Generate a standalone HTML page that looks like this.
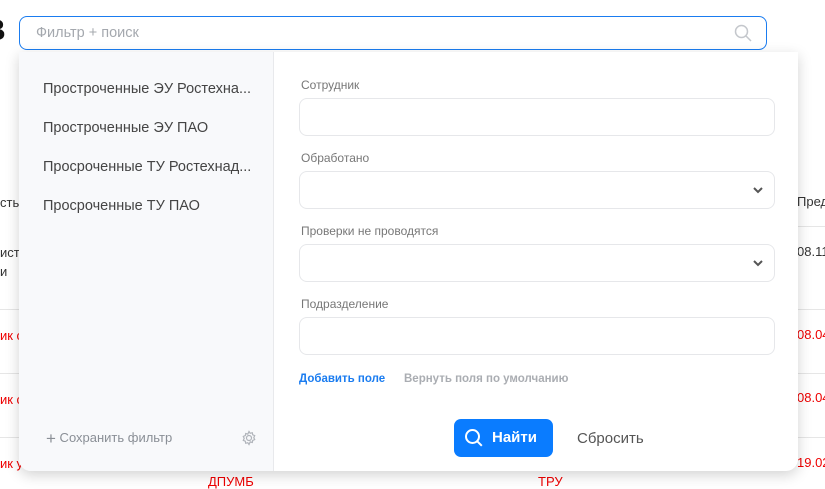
<!DOCTYPE html>
<html><head><meta charset="utf-8"><style>
*{box-sizing:border-box;margin:0;padding:0}
body{width:825px;height:479px;overflow:hidden;background:#fff;font-family:"Liberation Sans","Noto Sans CJK SC",sans-serif;position:relative;color:#333}
.a{position:absolute;white-space:nowrap}
.red{color:#e00}
.hl{position:absolute;height:1px;background:#e6e6e6}
.search{position:absolute;left:19px;top:16px;width:748px;height:34px;border:1px solid #1a7cf0;border-radius:8px;background:#fff}
.panel{position:absolute;left:19px;top:52px;width:779px;height:419px;background:#fff;border-radius:0 0 12px 12px;box-shadow:0 4px 14px rgba(0,0,0,.18);overflow:hidden}
.left{position:absolute;left:0;top:0;width:255px;height:100%;background:#f8f9fb;border-right:1px solid #e8e9ec}
.item{position:absolute;left:24px;font-size:14.5px;color:#444}
.lab{position:absolute;left:282px;font-size:12px;color:#777}
.inp{position:absolute;left:280px;width:476px;height:38px;border:1px solid #e6e7ea;border-radius:8px}
.chev{position:absolute;right:10px;top:13px}
</style></head><body>
<div class="a" style="left:-16px;top:14px;font-size:30px;font-weight:bold;color:#111">В</div>
<div class="a" style="left:0;top:195px;font-size:13px">сть</div>
<div class="a" style="left:0;top:245px;font-size:13px">ист</div>
<div class="a" style="left:0;top:264px;font-size:13px">и</div>
<div class="hl" style="left:0;top:309px;width:30px"></div>
<div class="a red" style="left:0;top:328px;font-size:13px">ик с</div>
<div class="hl" style="left:0;top:373px;width:30px"></div>
<div class="a red" style="left:0;top:392px;font-size:13px">ик с</div>
<div class="hl" style="left:0;top:437px;width:30px"></div>
<div class="a red" style="left:0;top:456px;font-size:13px">ик у</div>
<div class="a" style="left:797px;top:194px;font-size:13px">Пред</div>
<div class="hl" style="left:797px;top:226px;width:30px"></div>
<div class="a" style="left:797px;top:244px;font-size:13px">08.11</div>
<div class="hl" style="left:797px;top:309px;width:30px"></div>
<div class="a red" style="left:797px;top:327px;font-size:13px">08.04</div>
<div class="hl" style="left:797px;top:373px;width:30px"></div>
<div class="a red" style="left:797px;top:390px;font-size:13px">08.04</div>
<div class="hl" style="left:797px;top:437px;width:30px"></div>
<div class="a red" style="left:797px;top:455px;font-size:13px">19.02</div>
<div class="a red" style="left:208px;top:474px;font-size:13px">ДПУМБ</div>
<div class="a red" style="left:538px;top:474px;font-size:13px">ТРУ</div>

<div class="search">
<div class="a" style="left:16px;top:8px;font-size:14.5px;color:#a4a8ae">Фильтр + поиск</div>
<svg class="a" style="left:714px;top:7px" width="18" height="18" viewBox="0 0 18 18" fill="none" stroke="#c4c7cc" stroke-width="1.5"><circle cx="7.5" cy="7.5" r="6"/><path d="M12 12l5 5"/></svg>
</div>

<div class="panel">
<div class="left">
<div class="item" style="top:29px">Простроченные ЭУ Ростехна...</div>
<div class="item" style="top:68px">Простроченные ЭУ ПАО</div>
<div class="item" style="top:107px">Просроченные ТУ Ростехнад...</div>
<div class="item" style="top:146px">Просроченные ТУ ПАО</div>
<div class="a" style="left:27px;top:377px;font-size:13px;color:#8a8f96"><span style="font-size:17px;vertical-align:-2px">+</span> Сохранить фильтр</div>
<svg class="a" style="left:222px;top:378px" width="16" height="16" viewBox="0 0 16 16" fill="none" stroke="#b0b4ba" stroke-width="1.2"><circle cx="8" cy="8" r="2.5"/><path d="M8 1.5l1.2 1.8 2.1-.6.4 2.1 2 .8-.9 2 .9 2-2 .8-.4 2.1-2.1-.6L8 14.5l-1.2-1.8-2.1.6-.4-2.1-2-.8.9-2-.9-2 2-.8.4-2.1 2.1.6z"/></svg>
</div>
<div class="lab" style="top:26px">Сотрудник</div>
<div class="inp" style="top:46px"></div>
<div class="lab" style="top:99px">Обработано</div>
<div class="inp" style="top:119px"><svg class="chev" width="12" height="10" viewBox="0 0 12 10"><path d="M2 3l4 4 4-4" stroke="#555" stroke-width="2" fill="none"/></svg></div>
<div class="lab" style="top:172px">Проверки не проводятся</div>
<div class="inp" style="top:192px"><svg class="chev" width="12" height="10" viewBox="0 0 12 10"><path d="M2 3l4 4 4-4" stroke="#555" stroke-width="2" fill="none"/></svg></div>
<div class="lab" style="top:245px">Подразделение</div>
<div class="inp" style="top:265px"></div>
<div class="a" style="left:280px;top:321px;font-size:11.5px;font-weight:bold;color:#1a7cf0">Добавить поле</div>
<div class="a" style="left:385px;top:321px;font-size:11.5px;font-weight:bold;color:#aaadb2">Вернуть поля по умолчанию</div>
<div class="a" style="left:435px;top:367px;width:99px;height:38px;background:#0a7cff;border-radius:7px;color:#fff;font-weight:bold;font-size:15px">
<svg class="a" style="left:10px;top:9px" width="20" height="20" viewBox="0 0 20 20" fill="none" stroke="#fff" stroke-width="2"><circle cx="8.5" cy="8.5" r="6.5"/><path d="M13.3 13.3l4.5 4.5"/></svg>
<span class="a" style="left:38px;top:10px">Найти</span></div>
<div class="a" style="left:558px;top:378px;font-size:15px;color:#555">Сбросить</div>
</div>
</body></html>
